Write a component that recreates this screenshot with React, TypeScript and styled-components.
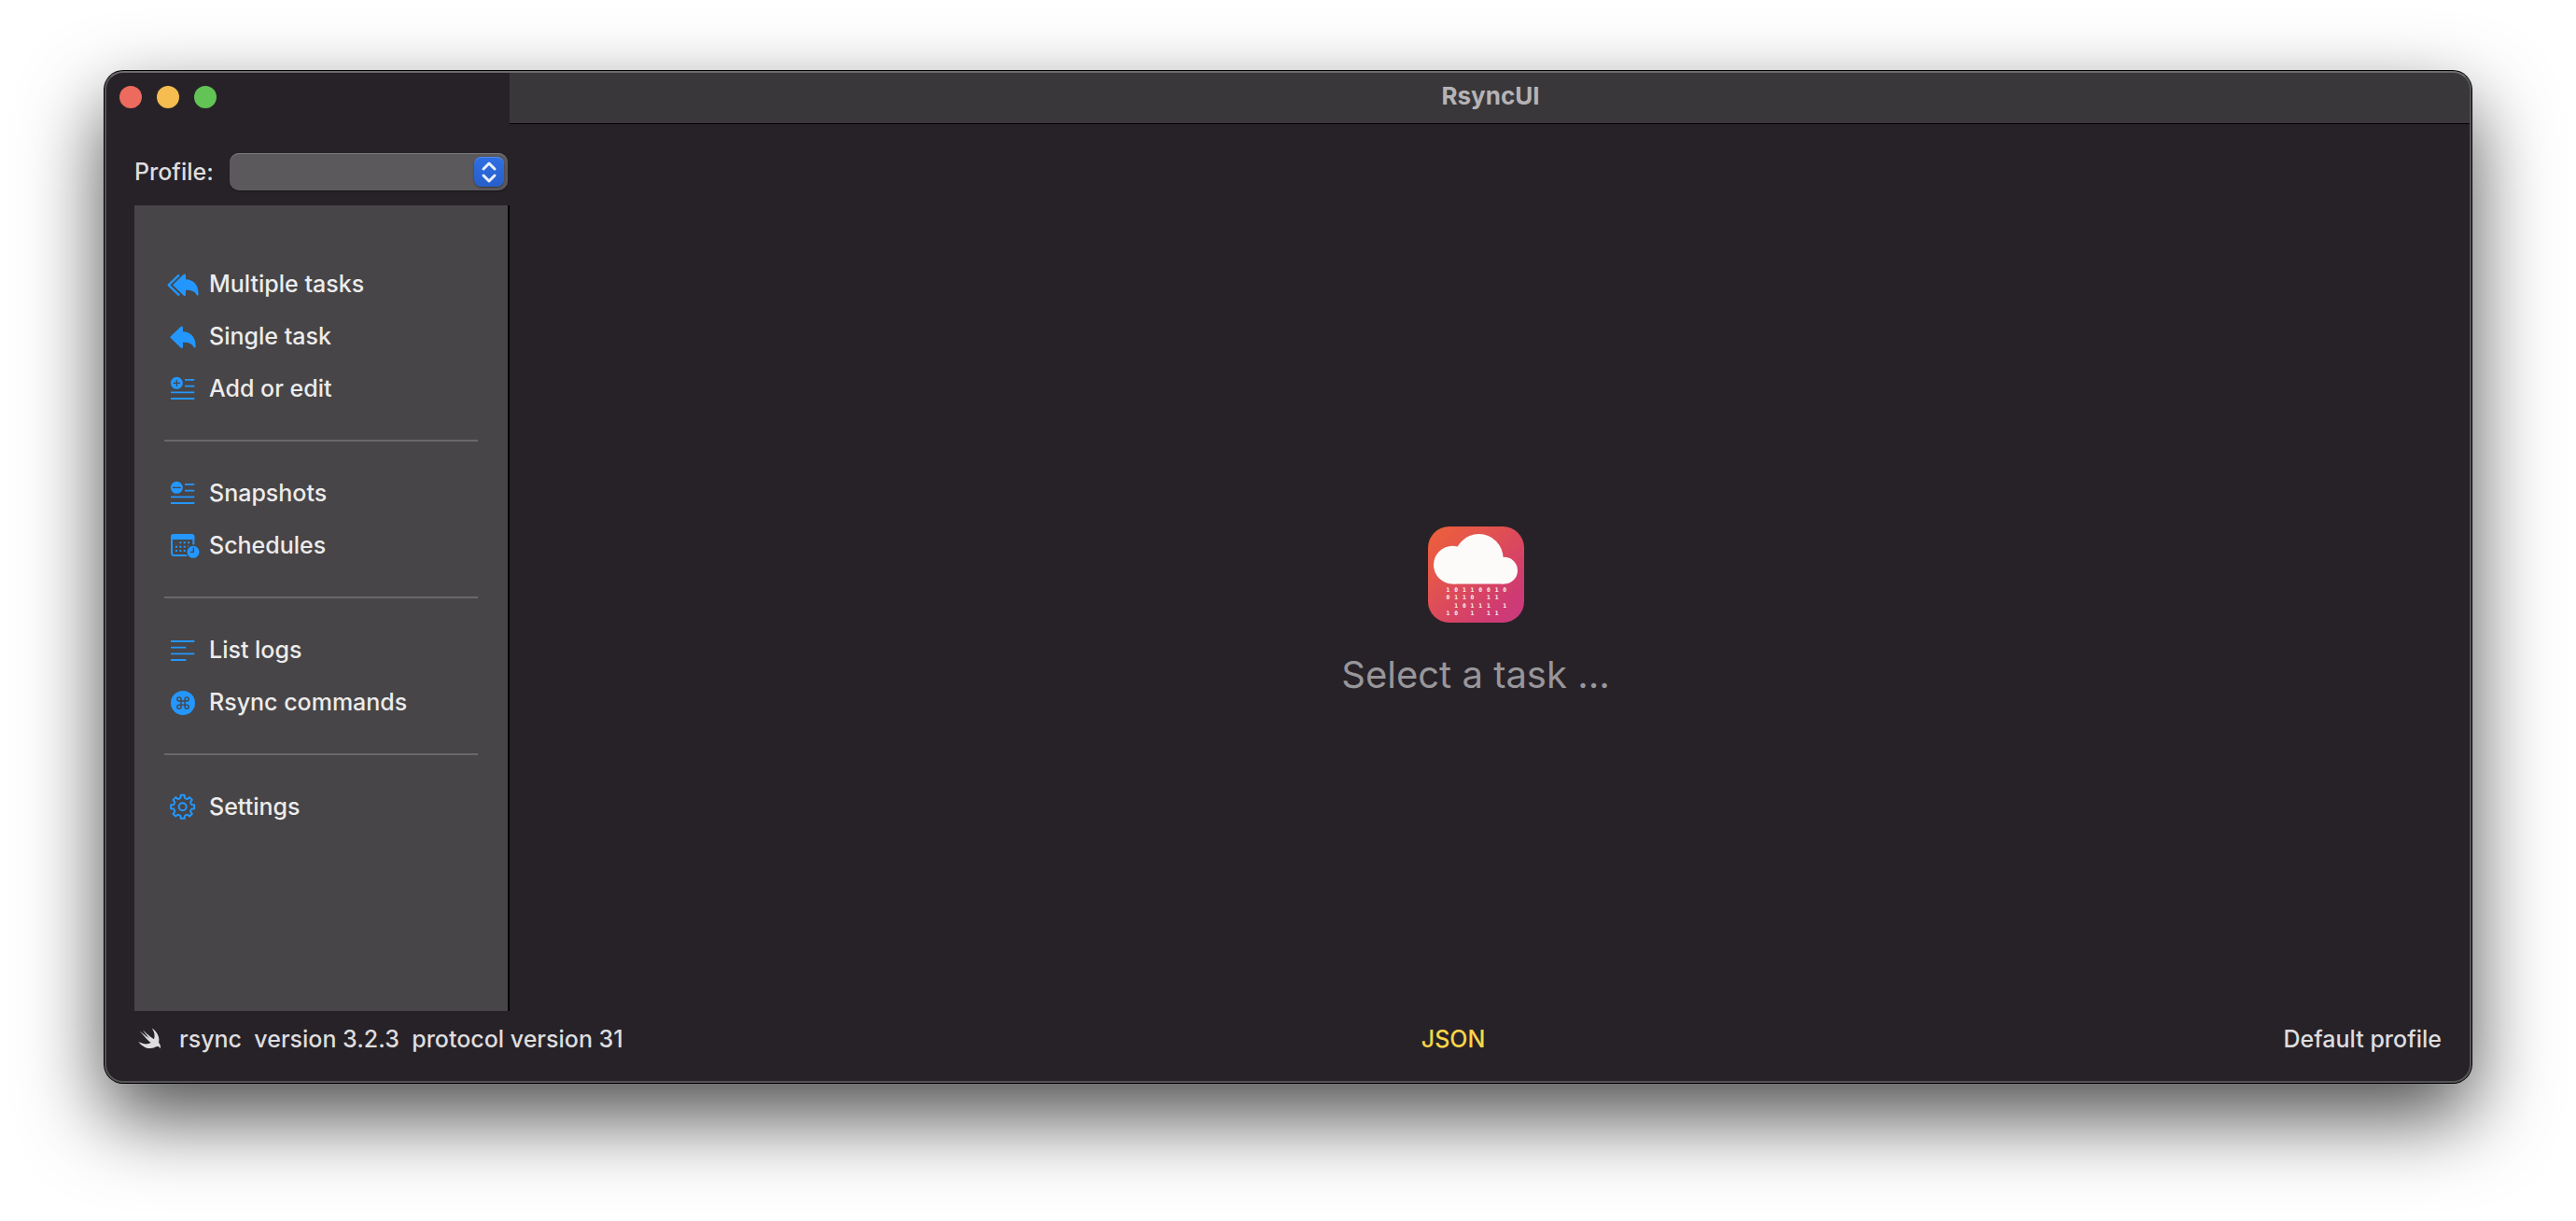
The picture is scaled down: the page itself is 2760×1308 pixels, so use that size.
import React from 'react';
import styled, { createGlobalStyle } from 'styled-components';

const color = {
  window: '#272228',
  titlebar: '#393739',
  panel: '#474547',
  accent: '#2397ff',
  text: '#dedddf',
  listText: '#ececec',
  muted: '#98969a',
  divider: '#6a686b',
  yellow: '#f8d549',
};

const GlobalStyle = createGlobalStyle`
  *, *::before, *::after { box-sizing: border-box; }
  body {
    margin: 0;
    background: #fff;
    font-family: Inter, "Liberation Sans", sans-serif;
    font-size: 25px;
    font-weight: 500;
    line-height: 32px;
    color: ${color.text};
  }
  button, select { font: inherit; color: inherit; }
`;

const Desktop = styled.div`
  display: flex;
  min-height: 100vh;
  padding: 76px 112px 148px;
  overflow: hidden;
`;

const Window = styled.div`
  position: relative;
  flex: 1;
  display: flex;
  flex-direction: column;
  border-radius: 20px;
  background: ${color.window};
  box-shadow: 0 0 0 1px #000, 0 36px 86px rgba(0, 0, 0, 0.7);

  &::after {
    content: '';
    position: absolute;
    inset: 0;
    border: 2px solid #555356;
    border-top-color: #6d6b6e;
    border-radius: inherit;
    pointer-events: none;
  }
`;

const Body = styled.div`
  flex: 1;
  display: flex;
`;

const Sidebar = styled.aside`
  width: 434px;
  display: flex;
  flex-direction: column;
`;

const TrafficLights = styled.div`
  display: flex;
  gap: 16px;
  padding: 16px;
`;

const Light = styled.button<{ $tint: string }>`
  width: 24px;
  height: 24px;
  padding: 0;
  border: 0;
  border-radius: 50%;
  background: ${(p) => p.$tint};
`;

const ProfileRow = styled.div`
  display: flex;
  align-items: center;
  justify-content: space-between;
  padding: 32px 2px 16px 32px;
`;

const PickerBox = styled.div`
  position: relative;
  width: 298px;
  height: 40px;
`;

const Picker = styled.select`
  display: block;
  appearance: none;
  width: 100%;
  height: 100%;
  border: 0;
  border-radius: 10px;
  background: #5b595c;
  box-shadow: inset 0 1px 0 #7b797c, 0 1px 2px rgba(0, 0, 0, 0.4);
`;

const Stepper = styled.svg`
  position: absolute;
  top: 4px;
  right: 4px;
  width: 32px;
  height: 32px;
  border-radius: 8px;
  background: linear-gradient(#2f6fe4, #275fc9);
  box-shadow: inset 0 1px 0 #5289e8, 0 1px 2px rgba(0, 0, 0, 0.4);
  pointer-events: none;
`;

const Nav = styled.nav`
  flex: 1;
  margin-left: 32px;
  padding: 56px 32px;
  border-right: 2px solid #000;
  background: ${color.panel};
`;

const NavGroup = styled.ul`
  margin: 0;
  padding: 0;
  list-style: none;

  & + & {
    padding-top: 27px;
    margin-top: 27px;
    border-top: 2px solid ${color.divider};
  }
`;

const NavButton = styled.button`
  display: flex;
  align-items: center;
  gap: 10px;
  width: 100%;
  height: 56px;
  padding: 0 2px;
  border: 0;
  background: none;
  color: ${color.listText};
  text-align: left;
`;

const Glyph = styled.svg`
  flex: none;
  width: 36px;
  height: 28px;
  fill: ${color.accent};
  overflow: visible;
`;

const Content = styled.div`
  flex: 1;
  display: flex;
  flex-direction: column;
`;

const TitleBar = styled.header`
  display: flex;
  align-items: center;
  justify-content: center;
  height: 57px;
  padding-bottom: 2px;
  border-bottom: 1px solid #000;
  border-top-right-radius: 20px;
  background: ${color.titlebar};
`;

const Title = styled.h1`
  margin: 0;
  font-size: 26px;
  line-height: 32px;
  font-weight: 700;
  color: #b5b3b6;
`;

const Placeholder = styled.main`
  flex: 1;
  display: flex;
  flex-direction: column;
  align-items: center;
  justify-content: center;
  gap: 30px;
  padding: 96px 32px 0 0;
`;

const AppIcon = styled.svg`
  width: 103px;
  height: 103px;
`;

const Prompt = styled.p`
  margin: 0;
  font-size: 40px;
  font-weight: 400;
  line-height: 52px;
  color: ${color.muted};
`;

const StatusBar = styled.footer`
  display: flex;
  align-items: center;
  justify-content: space-between;
  padding: 14px 32px 31px;
`;

const Version = styled.div`
  display: flex;
  align-items: center;
  gap: 16px;
  white-space: pre;
`;

const Bird = styled.svg`
  width: 32px;
  height: 24px;
  fill: ${color.text};
`;

const Format = styled.span`
  color: ${color.yellow};
`;

const ARROW =
  'M21 46 L55 13 Q63 7 63 16 V28 C88 29 104 45 104 75 Q103 83 99 79 C92 67 84 62 63 62 V76 Q63 85 55 79 Z';

function gearOutline(cx: number, cy: number): string {
  const at = (r: number, deg: number) => {
    const a = (deg * Math.PI) / 180;
    return `${(cx + r * Math.sin(a)).toFixed(1)} ${(cy - r * Math.cos(a)).toFixed(1)}`;
  };
  let d = '';
  for (let t = 0; t < 360; t += 45) {
    d += `${t ? 'L' : 'M'}${at(30, t - 13)} L${at(38, t - 9)} L${at(38, t + 9)} L${at(30, t + 13)} `;
    d += `Q${at(27, t + 22)} ${at(30, t + 32)} `;
  }
  return d + 'Z';
}

const textLines = (
  <path d="M60 14.5H91M60 35H91M15 55H91M15 75H91" stroke={color.accent} strokeWidth="5.5" />
);

const glyphs = {
  replyAll: (
    <>
      <path d={ARROW} />
      <path d="M42 13 L8 46 L42 79" fill="none" stroke={color.accent} strokeWidth="7" strokeLinejoin="round" />
    </>
  ),
  reply: <path d={ARROW} transform="translate(-9 0)" />,
  add: (
    <>
      <circle cx="34" cy="25" r="19.5" />
      <path d="M34 14V36M23 25H45" stroke={color.panel} strokeWidth="3.5" />
      {textLines}
    </>
  ),
  remove: (
    <>
      <circle cx="34" cy="25" r="19.5" />
      <path d="M22 25H46" stroke={color.panel} strokeWidth="4" strokeLinecap="round" />
      {textLines}
    </>
  ),
  calendar: (
    <>
      <rect x="18" y="9" width="70" height="66" rx="8" fill="none" stroke={color.accent} strokeWidth="6" />
      <path d="M15 24V16Q15 6 25 6H81Q91 6 91 16V24Z" />
      <path
        d="M43 34h6M56 34h6M69 34h6M30 47h6M43 47h6M56 47h6M69 47h6M30 60h6M43 60h6M56 60h6"
        stroke={color.accent}
        strokeWidth="6"
      />
      <circle cx="87" cy="64" r="24" fill={color.panel} />
      <circle cx="87" cy="64" r="19.5" />
      <path d="M88 51V64H79" fill="none" stroke={color.panel} strokeWidth="4" strokeLinecap="round" />
    </>
  ),
  list: <path d="M15 15H91M15 35H64M15 55H91M15 75H64" stroke={color.accent} strokeWidth="5.5" />,
  command: (
    <>
      <circle cx="54" cy="45" r="39" />
      <path
        d="M15 6v12a3 3 0 1 0 3-3H6a3 3 0 1 0 3 3V6a3 3 0 1 0-3 3h12a3 3 0 1 0-3-3"
        transform="translate(29.3 20.3) scale(2.06)"
        fill="none"
        stroke={color.panel}
        strokeWidth="2"
      />
    </>
  ),
  gear: (
    <g fill="none" stroke={color.accent} strokeWidth="6" strokeLinejoin="round">
      <path d={gearOutline(53, 43)} />
      <circle cx="53" cy="43" r="12" />
    </g>
  ),
};

type GlyphName = keyof typeof glyphs;

const groups: { label: string; icon: GlyphName }[][] = [
  [
    { label: 'Multiple tasks', icon: 'replyAll' },
    { label: 'Single task', icon: 'reply' },
    { label: 'Add or edit', icon: 'add' },
  ],
  [
    { label: 'Snapshots', icon: 'remove' },
    { label: 'Schedules', icon: 'calendar' },
  ],
  [
    { label: 'List logs', icon: 'list' },
    { label: 'Rsync commands', icon: 'command' },
  ],
  [{ label: 'Settings', icon: 'gear' }],
];

const rain = ['10110010', '0110 11 ', ' 10111 1', '10 1 11 '];

function RainCloud() {
  return (
    <AppIcon viewBox="0 0 308 308" aria-hidden="true">
      <defs>
        <linearGradient id="sunset" x1="0" y1="0" x2="1" y2="1">
          <stop offset="0" stopColor="#ee6039" />
          <stop offset="0.3" stopColor="#e4554c" />
          <stop offset="0.8" stopColor="#cf3a72" />
          <stop offset="1" stopColor="#c93a80" />
        </linearGradient>
      </defs>
      <rect width="308" height="308" rx="68" fill="url(#sunset)" />
      <g fill="#fdfbfa">
        <circle cx="79" cy="123" r="61" />
        <circle cx="163" cy="102" r="78" />
        <circle cx="244" cy="141" r="43" />
        <rect x="79" y="123" width="165" height="61" />
      </g>
      <g
        fill="#fdf3f0"
        fontFamily="'DejaVu Sans Mono', monospace"
        fontSize="19"
        fontWeight="700"
        textAnchor="middle"
      >
        {rain.map((row, r) =>
          [...row].map((digit, c) =>
            digit === ' ' ? null : (
              <text key={`${r}-${c}`} x={64 + c * 26} y={209 + r * 25}>
                {digit}
              </text>
            ),
          ),
        )}
      </g>
    </AppIcon>
  );
}

export default function App() {
  return (
    <>
      <GlobalStyle />
      <Desktop>
        <Window>
          <Body>
            <Sidebar>
              <TrafficLights>
                <Light $tint="#ed6a5e" aria-label="Close" />
                <Light $tint="#f5bd4f" aria-label="Minimize" />
                <Light $tint="#61c455" aria-label="Zoom" />
              </TrafficLights>
              <ProfileRow>
                <label htmlFor="profile">Profile:</label>
                <PickerBox>
                  <Picker id="profile">
                    <option value="" aria-label="None" />
                  </Picker>
                  <Stepper viewBox="0 0 32 32" aria-hidden="true">
                    <path
                      d="M10 13 L16 7 L22 13 M10 20 L16 26 L22 20"
                      fill="none"
                      stroke="#e9effb"
                      strokeWidth="3"
                      strokeLinecap="round"
                      strokeLinejoin="round"
                    />
                  </Stepper>
                </PickerBox>
              </ProfileRow>
              <Nav>
                {groups.map((items) => (
                  <NavGroup key={items[0].label}>
                    {items.map(({ label, icon }) => (
                      <li key={label}>
                        <NavButton>
                          <Glyph viewBox="0 0 108 84" aria-hidden="true">
                            {glyphs[icon]}
                          </Glyph>
                          {label}
                        </NavButton>
                      </li>
                    ))}
                  </NavGroup>
                ))}
              </Nav>
            </Sidebar>
            <Content>
              <TitleBar>
                <Title>RsyncUI</Title>
              </TitleBar>
              <Placeholder>
                <RainCloud />
                <Prompt>Select a task ...</Prompt>
              </Placeholder>
            </Content>
          </Body>
          <StatusBar>
            <Version>
              <Bird viewBox="-0.5 3.2 24 17.6" aria-hidden="true">
                <path d="M13.543 3.41c4.114 2.47 6.545 7.162 5.549 11.131-.024.093-.05.181-.076.272l.002.001c2.062 2.538 1.5 5.258 1.236 4.745-1.072-2.086-3.066-1.568-4.088-1.043a6.803 6.803 0 0 1-.281.158l-.02.012-.002.002c-2.115 1.123-4.957 1.205-7.812-.022a12.568 12.568 0 0 1-5.64-4.838c.649.48 1.35.902 2.097 1.252 3.019 1.414 6.051 1.311 8.197-.002C9.651 12.73 7.101 9.67 5.146 7.191a10.628 10.628 0 0 1-1.005-1.384c2.34 2.142 6.038 4.83 7.365 5.576C8.69 8.408 6.208 4.743 6.324 4.86c4.436 4.466 8.527 6.996 8.527 6.996.154.085.27.154.36.213.085-.215.16-.437.224-.668.708-2.588-.09-5.548-1.893-7.992z" />
              </Bird>
              <span>{'rsync  version 3.2.3  protocol version 31'}</span>
            </Version>
            <Format>JSON</Format>
            <span>Default profile</span>
          </StatusBar>
        </Window>
      </Desktop>
    </>
  );
}
